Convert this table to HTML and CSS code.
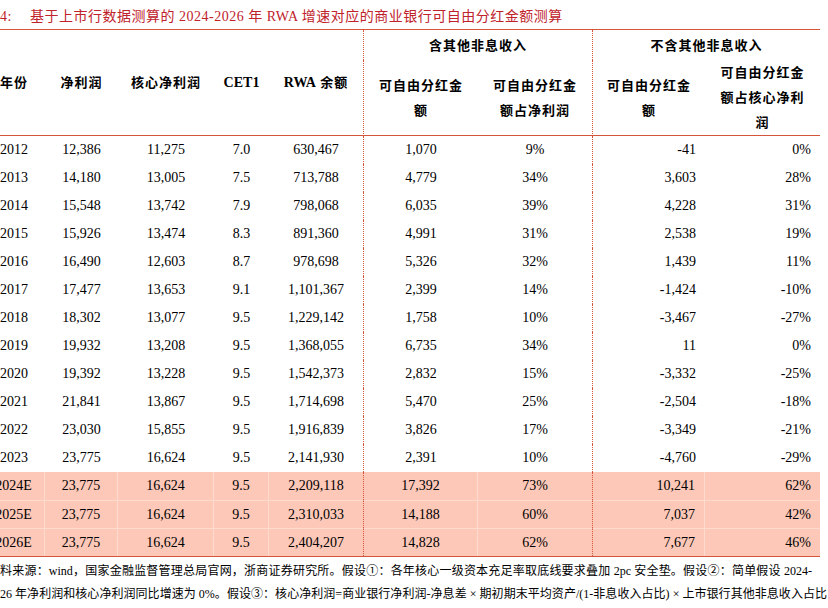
FILE: index.html
```html
<!DOCTYPE html>
<html lang="zh">
<head>
<meta charset="utf-8">
<link rel="stylesheet" href="styles.css">
</head>
<body>
<div class="title"><span class="num">4:</span>基于上市行数据测算的 2024-2026 年 RWA 增速对应的商业银行可自由分红金额测算</div>
<div class="frame">
<table class="tbl">
  <colgroup>
    <col class="c1"><col class="c2"><col class="c3"><col class="c4"><col class="c5"><col class="c6"><col class="c7"><col class="c8"><col class="c9">
  </colgroup>
  <thead>
    <tr class="hr1">
      <th rowspan="2" class="hb">年份</th>
      <th rowspan="2" class="hb">净利润</th>
      <th rowspan="2" class="hb">核心净利润</th>
      <th rowspan="2" class="hb lat">CET1</th>
      <th rowspan="2" class="hb"><span class="lat">RWA</span> 余额</th>
      <th colspan="2" class="dot">含其他非息收入</th>
      <th colspan="2" class="dot">不含其他非息收入</th>
    </tr>
    <tr class="hr2">
      <th class="hb dot">可自由分红金<br>额</th>
      <th class="hb">可自由分红金<br>额占净利润</th>
      <th class="hb dot">可自由分红金<br>额</th>
      <th class="hb">可自由分红金<br>额占核心净利<br>润</th>
    </tr>
  </thead>
  <tbody>
    <tr><td>2012</td><td>12,386</td><td>11,275</td><td>7.0</td><td>630,467</td><td class="dot">1,070</td><td>9%</td><td class="dot r">-41</td><td class="r">0%</td></tr>
    <tr><td>2013</td><td>14,180</td><td>13,005</td><td>7.5</td><td>713,788</td><td class="dot">4,779</td><td>34%</td><td class="dot r">3,603</td><td class="r">28%</td></tr>
    <tr><td>2014</td><td>15,548</td><td>13,742</td><td>7.9</td><td>798,068</td><td class="dot">6,035</td><td>39%</td><td class="dot r">4,228</td><td class="r">31%</td></tr>
    <tr><td>2015</td><td>15,926</td><td>13,474</td><td>8.3</td><td>891,360</td><td class="dot">4,991</td><td>31%</td><td class="dot r">2,538</td><td class="r">19%</td></tr>
    <tr><td>2016</td><td>16,490</td><td>12,603</td><td>8.7</td><td>978,698</td><td class="dot">5,326</td><td>32%</td><td class="dot r">1,439</td><td class="r">11%</td></tr>
    <tr><td>2017</td><td>17,477</td><td>13,653</td><td>9.1</td><td>1,101,367</td><td class="dot">2,399</td><td>14%</td><td class="dot r">-1,424</td><td class="r">-10%</td></tr>
    <tr><td>2018</td><td>18,302</td><td>13,077</td><td>9.5</td><td>1,229,142</td><td class="dot">1,758</td><td>10%</td><td class="dot r">-3,467</td><td class="r">-27%</td></tr>
    <tr><td>2019</td><td>19,932</td><td>13,208</td><td>9.5</td><td>1,368,055</td><td class="dot">6,735</td><td>34%</td><td class="dot r">11</td><td class="r">0%</td></tr>
    <tr><td>2020</td><td>19,392</td><td>13,228</td><td>9.5</td><td>1,542,373</td><td class="dot">2,832</td><td>15%</td><td class="dot r">-3,332</td><td class="r">-25%</td></tr>
    <tr><td>2021</td><td>21,841</td><td>13,867</td><td>9.5</td><td>1,714,698</td><td class="dot">5,470</td><td>25%</td><td class="dot r">-2,504</td><td class="r">-18%</td></tr>
    <tr><td>2022</td><td>23,030</td><td>15,855</td><td>9.5</td><td>1,916,839</td><td class="dot">3,826</td><td>17%</td><td class="dot r">-3,349</td><td class="r">-21%</td></tr>
    <tr><td>2023</td><td>23,775</td><td>16,624</td><td>9.5</td><td>2,141,930</td><td class="dot">2,391</td><td>10%</td><td class="dot r">-4,760</td><td class="r">-29%</td></tr>
    <tr class="est first"><td>2024E</td><td>23,775</td><td>16,624</td><td>9.5</td><td class="nb">2,209,118</td><td class="dot">17,392</td><td class="nb">73%</td><td class="dot r">10,241</td><td class="r nb">62%</td></tr>
    <tr class="est"><td>2025E</td><td>23,775</td><td>16,624</td><td>9.5</td><td class="nb">2,310,033</td><td class="dot">14,188</td><td class="nb">60%</td><td class="dot r">7,037</td><td class="r nb">42%</td></tr>
    <tr class="est"><td>2026E</td><td>23,775</td><td>16,624</td><td>9.5</td><td class="nb">2,404,207</td><td class="dot">14,828</td><td class="nb">62%</td><td class="dot r">7,677</td><td class="r nb">46%</td></tr>
  </tbody>
</table>
</div>
<div class="notes">
  <div class="note n1">料来源：wind，国家金融监督管理总局官网，浙商证券研究所。假设①：各年核心一级资本充足率取底线要求叠加 2pc 安全垫。假设②：简单假设 2024-</div>
  <div class="note n2">26 年净利润和核心净利润同比增速为 0%。假设③：核心净利润=商业银行净利润-净息差 × 期初期末平均资产/(1-非息收入占比) × 上市银行其他非息收入占比</div>
</div>
</body>
</html>
```
FILE: styles.css
```css
html, body {
  margin: 0;
  padding: 0;
  background: #fff;
}
body {
  width: 828px;
  height: 608px;
  overflow: hidden;
  font-family: "Liberation Serif", "Noto Sans CJK SC", serif;
  color: #000;
}
.title {
  height: 29px;
  box-sizing: border-box;
  padding-top: 4px;
  line-height: 25px;
  font-size: 14px;
  letter-spacing: 0.5px;
  color: #c0222b;
  white-space: nowrap;
}
.title .num {
  display: inline-block;
  width: 30px;
}
.frame {
  width: 820px;
  overflow: hidden;
}
.tbl {
  margin-left: -17px;
  width: 837px;
  table-layout: fixed;
  border-collapse: separate;
  border-spacing: 0;
  border-top: 1px solid #d4553a;
  border-bottom: 1px solid #d4553a;
}
.c1 { width: 62px; }
.c2 { width: 73px; }
.c3 { width: 96px; }
.c4 { width: 55px; }
.c5 { width: 94px; }
.c6 { width: 115px; }
.c7 { width: 114px; }
.c8 { width: 113px; }
.c9 { width: 115px; }
th {
  padding: 0;
  font-size: 13px;
  font-weight: 700;
  letter-spacing: 1px;
  line-height: 25px;
  text-align: center;
  vertical-align: middle;
  white-space: nowrap;
}
th .lat, th.lat {
  font-size: 14px;
  letter-spacing: 0;
}
.hr1 { height: 30px; }
.hr1 th { height: 30px; }
.hr2 th { height: 74px; }
.hb { border-bottom: 1px solid #d4553a; }
td {
  padding: 0;
  height: 28px;
  font-size: 14px;
  text-align: center;
  vertical-align: middle;
  white-space: nowrap;
  box-sizing: border-box;
}
td.r {
  text-align: right;
  padding-right: 9px;
}
.dot { border-left: 1px dotted #d4553a; }
.est td {
  background: #fdc8b8;
  border-right: 1px solid #fddccf;
}
.est td.nb { border-right: none; }
.est:not(.first) td { border-top: 1px solid #fddccf; }
.notes {
  padding-top: 3px;
}
.note {
  font-size: 12px;
  line-height: 23px;
  white-space: nowrap;
  text-align: justify;
  text-align-last: justify;
  text-justify: inter-character;
}
.n1 { width: 812px; }
.n2 { width: 827px; }
```
